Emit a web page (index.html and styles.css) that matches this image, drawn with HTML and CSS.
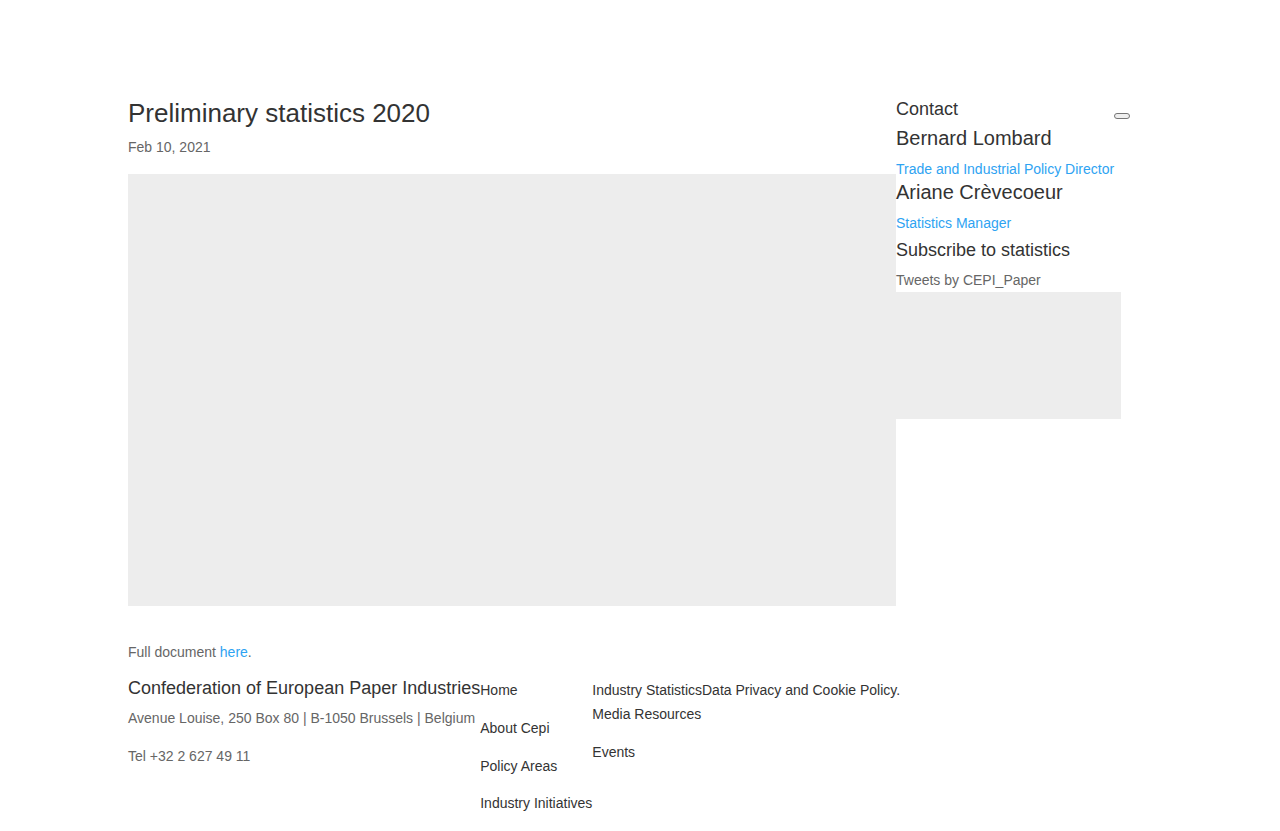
FILE: index.html
```html
<!DOCTYPE html>
<html lang="en">
<head>
<meta charset="utf-8">
<title>Preliminary statistics 2020</title>
<link rel="stylesheet" href="styles.css">
</head>
<body>
<div class="page">
  <div class="layout">
    <main class="content">
      <h1 class="title">Preliminary statistics 2020</h1>
      <p class="meta">Feb 10, 2021</p>
      <div class="embed"></div>
      <p class="doc">Full document <a href="#">here</a>.</p>
      <footer class="footer">
        <div class="org">
          <h4 class="org-name">Confederation of European Paper Industries</h4>
          <p class="org-line">Avenue Louise, 250 Box 80 | B-1050 Brussels | Belgium</p>
          <p class="org-line">Tel +32 2 627 49 11</p>
        </div>
        <ul class="nav">
          <li class="nav-item">Home</li>
          <li class="nav-item">About Cepi</li>
          <li class="nav-item">Policy Areas</li>
          <li class="nav-item">Industry Initiatives</li>
        </ul>
        <ul class="nav">
          <li class="nav-item tight">Industry Statistics</li>
          <li class="nav-item">Media Resources</li>
          <li class="nav-item">Events</li>
        </ul>
        <div class="legal">Data Privacy and Cookie Policy.</div>
      </footer>
    </main>
    <aside class="sidebar">
      <div class="contact-row">
        <h4 class="side-title">Contact</h4>
        <button class="toggle" type="button"></button>
      </div>
      <h3 class="person">Bernard Lombard</h3>
      <a class="role" href="#">Trade and Industrial Policy Director</a>
      <h3 class="person">Ariane Crèvecoeur</h3>
      <a class="role" href="#">Statistics Manager</a>
      <h4 class="side-title subscribe">Subscribe to statistics</h4>
      <p class="tweets">Tweets by CEPI_Paper</p>
      <div class="tweet-box"></div>
    </aside>
  </div>
</div>
</body>
</html>
```

FILE: styles.css
```css
* { box-sizing: border-box; }
html, body { margin: 0; padding: 0; background: #fff; }
body {
  font-family: "Liberation Sans", Arial, sans-serif;
  font-size: 14px;
  line-height: 1.7em;
  color: #666;
}
a { color: #2ea3f2; text-decoration: none; }
h1, h3, h4, p, ul { margin: 0; padding: 0; }
ul { list-style: none; }

.page { padding: 100px 0 0 128px; }
.layout { display: flex; align-items: flex-start; }

.content { width: 768px; flex: none; }
.title {
  font-size: 26px;
  line-height: 1em;
  font-weight: 500;
  color: #333;
  padding-bottom: 10px;
}
.meta { line-height: 23.8px; margin-top: -0.5px; }
.embed { height: 432px; background: #ededed; margin-top: 15px; }
.doc { line-height: 23.8px; padding-bottom: 14px; margin-top: 35px; }

.footer { display: flex; align-items: flex-start; width: 800px; }
.org { flex: none; }
.org-name {
  font-size: 18px;
  line-height: 18px;
  font-weight: 500;
  color: #333;
  padding-bottom: 10px;
}
.org-line { line-height: 23.8px; padding-bottom: 14px; }
.nav { flex: none; }
.nav-item { color: #333; line-height: 23.8px; padding-bottom: 14px; }
.nav-item.tight { padding-bottom: 0; }
.legal { flex: none; color: #333; line-height: 23.8px; }

.sidebar { width: 234px; flex: none; }
.contact-row { display: flex; justify-content: space-between; align-items: flex-start; }
.side-title {
  font-size: 18px;
  line-height: 18px;
  font-weight: 500;
  color: #333;
  padding-bottom: 10px;
}
.subscribe { margin-top: 5px; }
.toggle {
  width: 16px;
  height: 6px;
  margin-top: 13px;
  padding: 0;
  border: 1px solid #767676;
  border-radius: 3px;
  background: #efefef;
}
.person {
  font-size: 20px;
  line-height: 20px;
  font-weight: 500;
  color: #333;
  padding-bottom: 10px;
}
.role { display: block; line-height: 23.8px; }
.tweets { line-height: 23.8px; }
.tweet-box { width: 225px; height: 127px; background: #ededed; }
```
